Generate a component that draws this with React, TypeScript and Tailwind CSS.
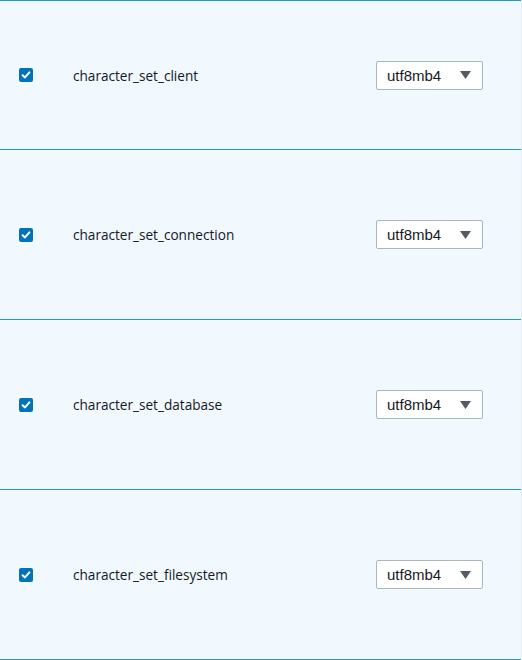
import React from "react";

const rows = [
  "character_set_client",
  "character_set_connection",
  "character_set_database",
  "character_set_filesystem",
];

function Check() {
  return (
    <div className="w-[14px] h-[14px] rounded-[2px] bg-[#0073bb] flex items-center justify-center shrink-0">
      <svg width="10" height="10" viewBox="0 0 10 10">
        <path d="M1.6 5.2 L4 7.4 L8.4 2.4" fill="none" stroke="#ffffff" strokeWidth="2" strokeLinecap="round" strokeLinejoin="round" />
      </svg>
    </div>
  );
}

function Select() {
  return (
    <div className="w-[107px] h-[29px] bg-white border border-[#aab7b8] rounded-[2px] flex items-center pl-[10px] pr-[11px] justify-between">
      <span className="text-[15px] text-[#16191f] leading-none" style={{ fontFamily: '"Liberation Sans", Arial, sans-serif' }}>utf8mb4</span>
      <svg width="11" height="8" viewBox="0 0 11 8">
        <path d="M0 0 L11 0 L5.5 8 Z" fill="#545b64" />
      </svg>
    </div>
  );
}

export default function App() {
  return (
    <div className="w-[522px] h-[660px] bg-[#f1f8fe] overflow-hidden border-r border-[#e6eef4]" style={{ fontFamily: '"Open Sans", "Noto Sans", sans-serif' }}>
      {rows.map((r, i) => (
        <div
          key={r}
          className={
            i === 0
              ? "h-[150px] border-t border-b border-[#1f9ac0] flex items-center pl-[19px] pr-[38px]"
              : "h-[170px] border-b border-[#1f9ac0] flex items-center pl-[19px] pr-[38px]"
          }
        >
          <Check />
          <span className="ml-[40px] pt-[2px] text-[13.6px] text-[#16191f] flex-1">{r}</span>
          <Select />
        </div>
      ))}
    </div>
  );
}
